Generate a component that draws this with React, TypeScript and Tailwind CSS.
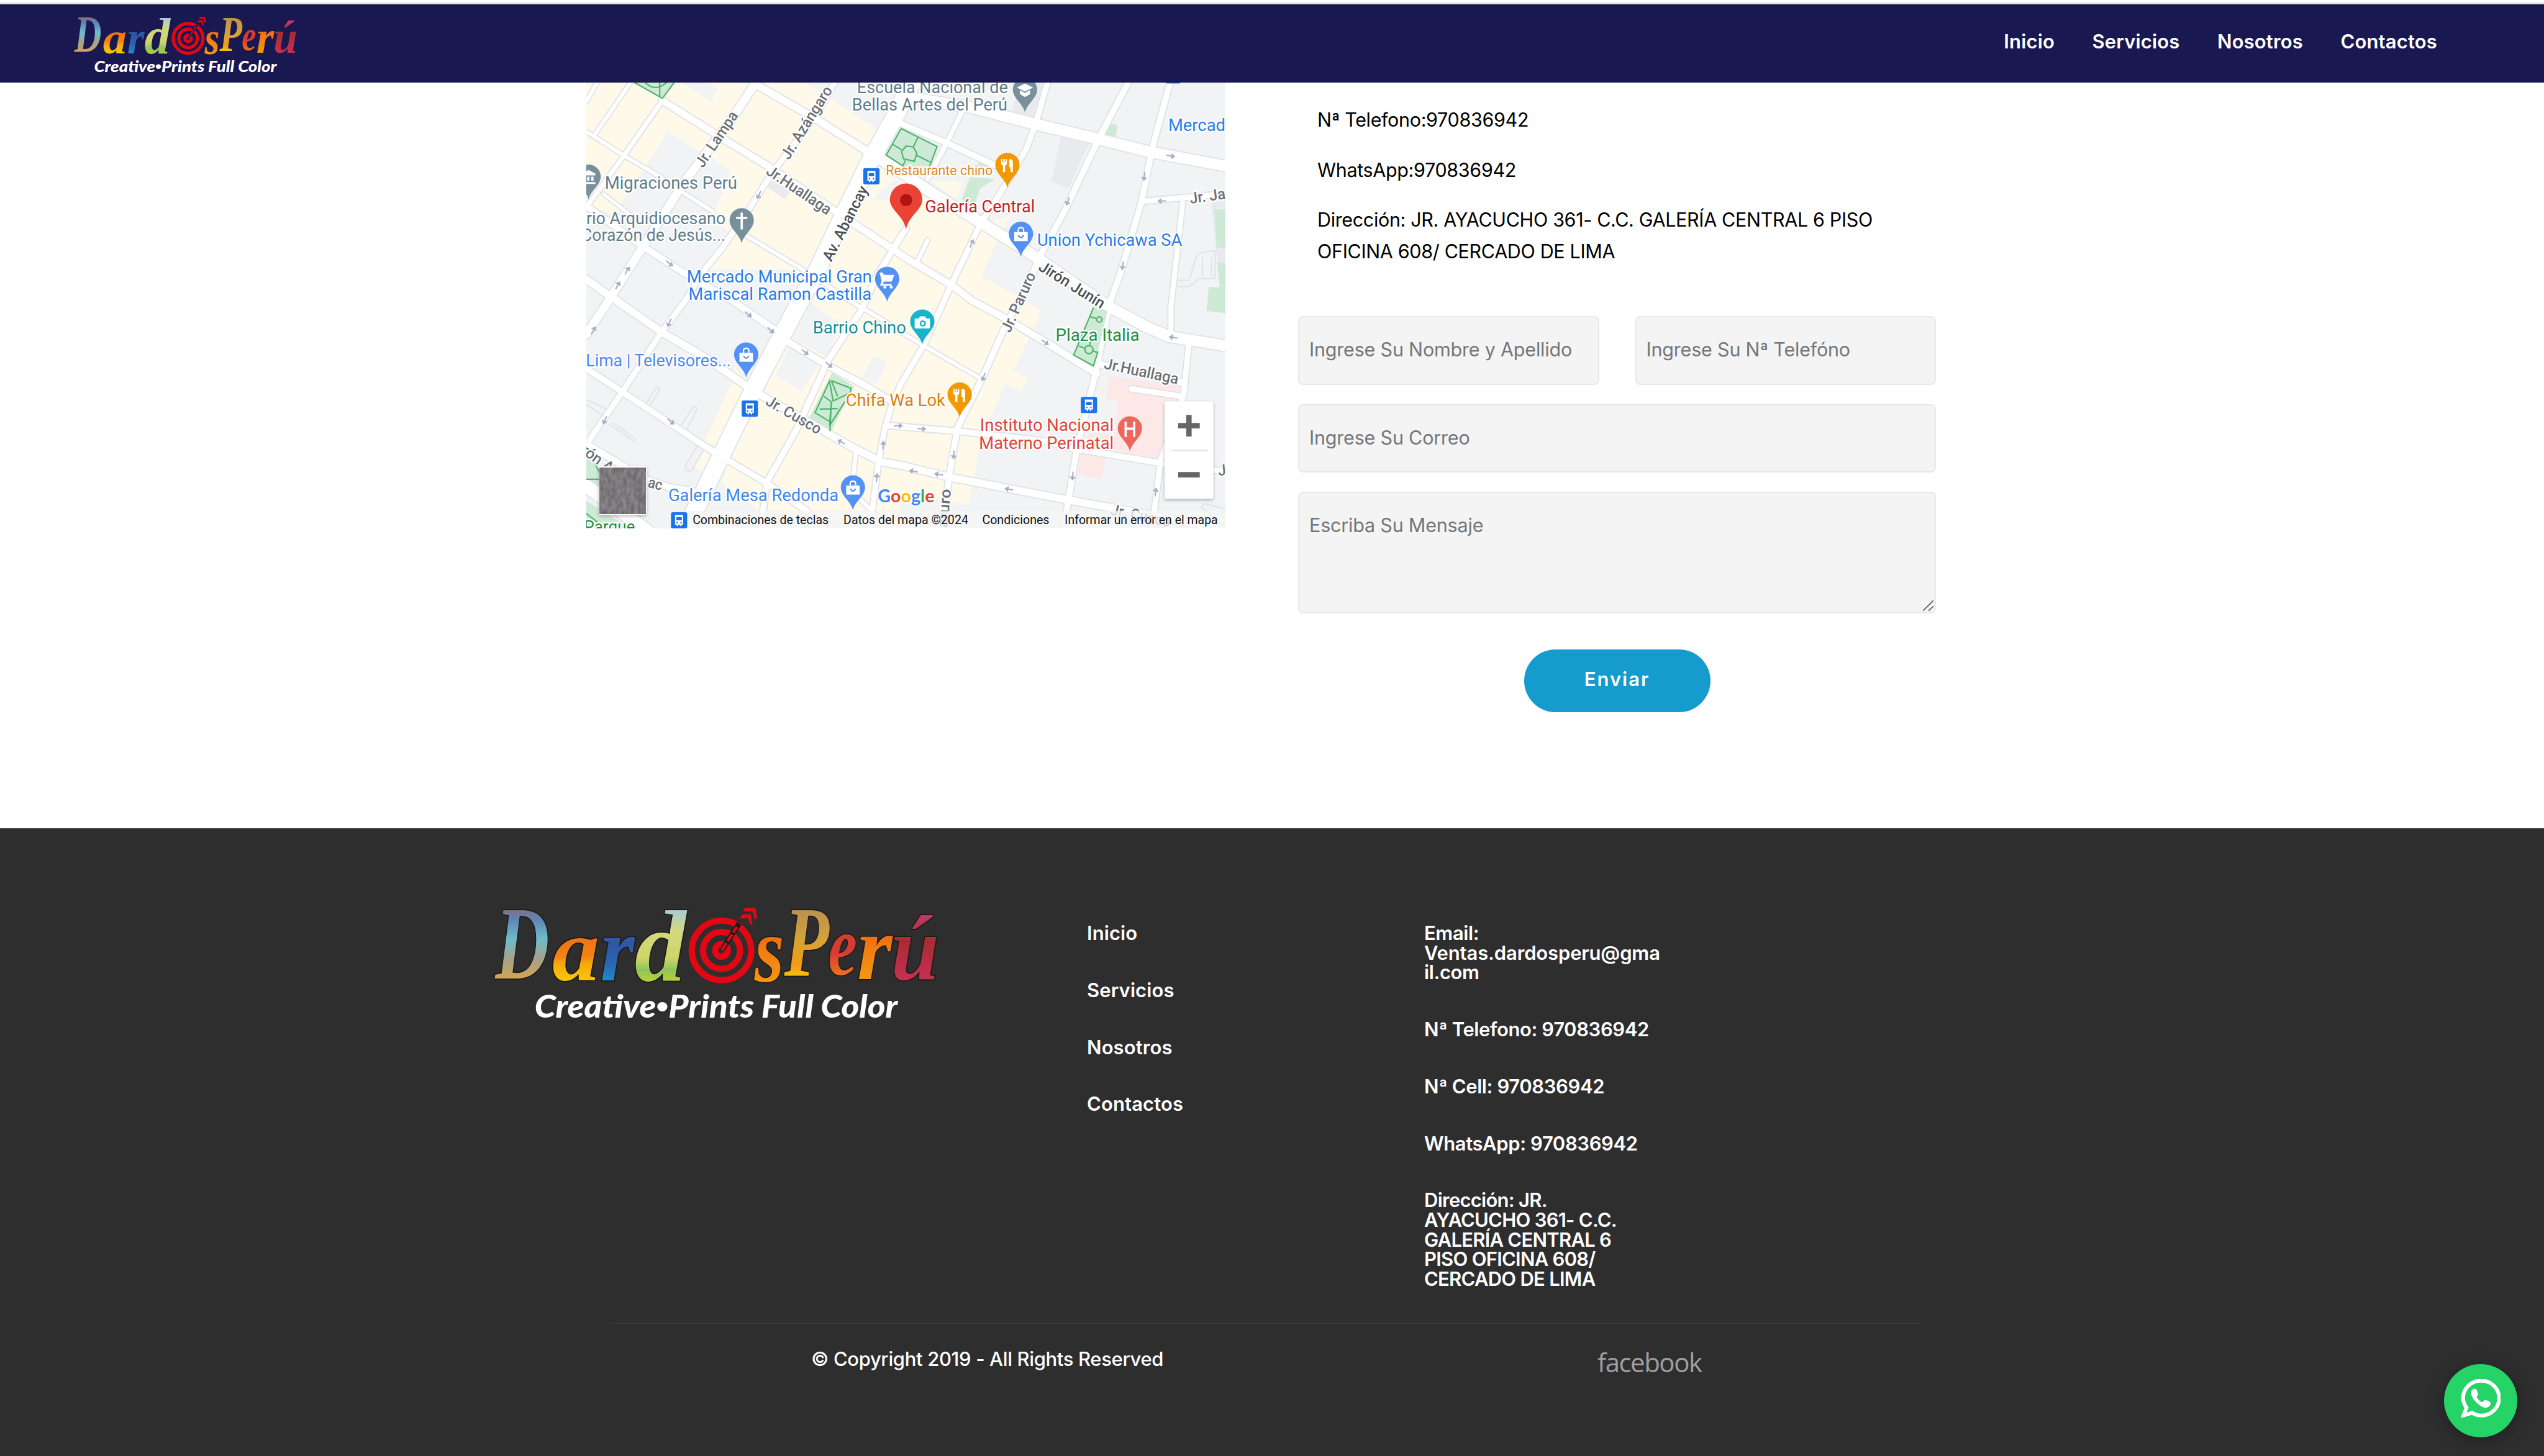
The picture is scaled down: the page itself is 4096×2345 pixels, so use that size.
import React from "react";

/* ---------- Logo ---------- */

type Letter = { ch: string; x: number; y: number; w: number; size: number; fill: string };

const letters: Letter[] = [
  { ch: "D", x: 5, y: 158, w: 120, size: 232, fill: "lgD" },
  { ch: "a", x: 131, y: 162, w: 105, size: 200, fill: "lgA" },
  { ch: "r", x: 238, y: 162, w: 76, size: 204, fill: "lgR" },
  { ch: "d", x: 314, y: 163, w: 114, size: 226, fill: "lgd" },
  { ch: "s", x: 580, y: 166, w: 66, size: 206, fill: "lgS" },
  { ch: "P", x: 646, y: 152, w: 100, size: 222, fill: "lgP" },
  { ch: "e", x: 744, y: 150, w: 64, size: 190, fill: "lgE" },
  { ch: "r", x: 808, y: 160, w: 78, size: 204, fill: "lgS" },
  { ch: "ú", x: 884, y: 160, w: 106, size: 204, fill: "lgU" },
];

const gradients: [string, [number, string][]][] = [
  ["lgD", [[0, "#a3605a"], [0.2, "#5f83b4"], [0.45, "#6cbcc9"], [0.7, "#a7a28a"], [1, "#dca545"]]],
  ["lgA", [[0, "#ea5f12"], [0.6, "#f38314"], [0.7, "#f7a80c"], [1, "#f8d000"]]],
  ["lgR", [[0, "#2e8fd0"], [0.4, "#2f56a6"], [0.7, "#2a66b0"], [1, "#1c93d2"]]],
  ["lgd", [[0, "#9ecbe0"], [0.3, "#d3d980"], [0.65, "#cfd566"], [0.8, "#8fc45a"], [1, "#c9d42c"]]],
  ["lgS", [[0, "#e65410"], [0.5, "#f37c12"], [1, "#f39a12"]]],
  ["lgP", [[0, "#b68c55"], [0.5, "#d7a336"], [0.8, "#f39a14"], [1, "#f8d400"]]],
  ["lgE", [[0, "#d5402a"], [0.6, "#d83a35"], [1, "#ef7a1a"]]],
  ["lgU", [[0, "#c43a6c"], [0.4, "#a82c34"], [1, "#cb2f55"]]],
];

function Logo({ className, id, outline }: { className: string; id: string; outline: string }) {
  return (
    <svg className={className + " overflow-visible"} viewBox="0 0 990 248" preserveAspectRatio="none">
      <defs>
        {gradients.map(([name, stops]) => (
          <linearGradient key={name} id={id + name} x1="0" y1="0.15" x2="0" y2="0.85">
            {stops.map(([o, c]) => (
              <stop key={o} offset={o} stopColor={c} />
            ))}
          </linearGradient>
        ))}
      </defs>
      {letters.map((l, i) => (
        <text
          key={i}
          x={l.x}
          y={l.y}
          fontSize={l.size}
          textLength={l.w}
          lengthAdjust="spacingAndGlyphs"
          fontFamily="Liberation Serif, serif"
          fontStyle="italic"
          fontWeight="700"
          fill={`url(#${id}${l.fill})`}
          stroke={outline}
          strokeWidth="5"
          paintOrder="stroke"
        >
          {l.ch}
        </text>
      ))}
      <g fill="none" stroke="#e30613" strokeWidth="14">
        <circle cx="507" cy="96" r="66" />
        <circle cx="507" cy="96" r="41" />
        <circle cx="507" cy="96" r="14" />
      </g>
      <path d="M510 92 L546 36" stroke={outline} strokeWidth="12" fill="none" />
      <path d="M508 95 L541 44" stroke="#e30613" strokeWidth="6" fill="none" strokeDasharray="18 5" />
      <path d="M546 26 L554 16 H572 L576 40 L570 38 L566 24 Z M554 9 L560 1 H582 L586 24 L581 27 L576 10 Z" fill="#e30613" />
      <text
        x="92"
        y="245"
        fontSize="70"
        textLength="806"
        lengthAdjust="spacingAndGlyphs"
        fontFamily="Lato, sans-serif"
        fontStyle="italic"
        fontWeight="900"
        fill="#fff"
      >
        Creative
        <tspan fontFamily="Liberation Sans, sans-serif" fontSize="72" fontStyle="normal">•</tspan>
        Prints Full Color
      </text>
    </svg>
  );
}

/* ---------- Map ---------- */

const roads: [string, number][] = [
  ["1400,183 1322,297", 8],
  ["1326,183 1302,225", 8],
  ["1471,223 1382,350 1302,460", 10],
  ["1304,293 1382,343 1474,397 1510,423 1584,470", 8],
  ["1340,430 1410,485", 7],
  ["1657,523 1786,600 1891,670 1955,707 2000,737 2051,767 2177,840", 8],
  ["1302,457 1428,547 1510,600 1630,670 1722,733 1749,758 1841,813 1924,857 1979,890", 14],
  ["1302,620 1359,660 1469,737 1565,793 1653,853 1689,877 1818,950 1887,990 1956,1025 2000,1033 2112,1060 2372,1110 2484,1130 2721,1175", 16],
  ["1302,818 1382,870 1575,997 1602,1013 1703,1073 1790,1133 1830,1173", 13],
  ["1302,985 1430,1062 1480,1080 1545,1092", 14],
  ["1290,1070 1440,1180", 28],
  ["1471,223 1588,297 1703,367 1852,467 1891,493 1983,553 2012,573 2112,632 2158,667 2242,712 2326,762 2436,830", 15],
  ["1680,188 1809,262 1928,337", 16],
  ["2440,808 2628,850", 14],
  ["1680,180 1630,257 1520,403 1428,547 1350,670 1302,742", 18],
  ["1855,180 1809,260 1712,387 1666,460 1602,553 1561,603 1520,670 1469,737 1382,870 1302,987", 12],
  ["2012,507 1983,553 1943,620 1914,687 1836,803 1822,837 1767,957 1703,1070 1694,1137 1692,1173", 13],
  ["1840,800 1790,900", 10],
  ["2326,183 2298,280 2279,330 2237,403 2177,497 2112,632 2091,680 2051,767 2000,853 1979,903 1965,950 1951,1023 1932,1173", 12],
  ["2505,183 2442,303 2363,470 2307,573 2279,643 2237,713 2182,837 2126,950 2107,1060 2095,1175", 13],
  ["2598,183 2559,327 2535,447 2489,603 2464,673 2433,827 2391,997 2368,1137 2362,1175", 13],
  ["2140,240 2102,317 2060,397", 10],
  ["2003,275 2102,317 2210,367", 13],
  ["2535,447 2721,430", 12],
  ["2626,450 2600,680 2600,740", 11],
  ["2640,763 2628,877 2577,1023 2558,1175", 12],
  ["1975,945 2000,947 2126,957 2326,980 2391,997 2577,1028 2721,1047", 13],
  ["1901,1000 1891,1090 1935,1133", 9],
  ["2037,580 2060,533", 9],
  ["2512,863 2626,880", 12],
  ["2000,213 2154,238 2298,275 2433,307 2554,337 2725,369", 24],
  ["1928,337 2000,381 2065,425 2177,493 2261,545 2307,575 2382,627 2465,682 2549,727 2596,747 2725,768", 24],
  ["2025,183 1992,250 1928,365 1880,463 1816,597 1776,670 1682,847 1607,1000 1543,1133 1524,1180", 38],
];

const cream = [
  "1302,183 1786,183 1947,285 1900,450 1805,600 1575,597 1620,520 1584,470 1610,420 1621,377 1483,293 1382,447 1370,480 1302,455",
  "1928,365 2006,385 2177,493 2214,537 2179,613 2293,677 2312,693 2251,822 2284,842 2268,870 2233,852 2196,933 2177,977 2163,1060 2151,1122 2112,1113 2000,1100 1995,1173 1690,1137 1602,1070 1682,847 1776,670 1880,463",
  "1625,850 1653,863 1588,990 1565,977",
  "1565,1000 1582,1008 1559,1047 1543,1037",
  "1630,813 1657,843 1648,847 1625,825",
  "2065,400 2140,403 2123,443",
  "2200,490 2242,480 2228,513",
];

const grey = [
  "1515,183 1570,183 1595,195 1578,225",
  "1722,833 1781,868 1820,807 1754,767",
  "1758,750 1836,793 1868,717 1823,690 1800,670",
  "1940,790 1970,803 1947,853 1914,840",
  "1940,440 1985,400 2000,400 1985,440 1965,446",
];

const darkGrey = [
  "1703,415 1716,400 1756,423 1744,442",
  "2356,303 2419,318 2372,418 2335,403",
  "2247,245 2303,267 2320,183 2265,183",
  "2690,450 2721,445 2721,583 2703,583",
];

const pink = [
  "2463,835 2621,857 2615,890 2587,890 2582,1020 2414,985 2414,962 2475,963 2482,890 2456,887",
  "2400,1007 2454,1018 2445,1062 2393,1052",
];

const green = [
  "2459,273 2482,277 2477,305 2452,300",
  "2154,393 2210,397 2177,417 2163,457 2135,443",
  "2170,352 2200,372 2172,368",
  "2696,465 2721,465 2721,550 2701,550",
  "2703,583 2721,583 2721,695 2679,690 2684,637 2708,637",
  "1302,1015 1325,1030 1335,1060 1335,1100 1302,1075",
  "1302,1112 1400,1173 1302,1173",
];

const parks = [
  "2001,285 2081,325 2063,372 2008,370 1968,344",
  "2428,680 2459,690 2438,780 2428,812 2384,788",
  "1848,827 1896,857 1846,957 1797,927",
  "1409,183 1471,220 1497,183",
];

const parkPaths = [
  "M2001 285 L2081 325 L2063 372 M2001 285 L1968 344 L2008 370 M2038 305 L2028 326 L2036 340 L2030 358 L2006 352 L2002 336 L2012 324 L2028 326 M1982 320 L2002 332 M2036 345 L2067 360 M2012 352 L2005 368",
  "M2428 683 L2384 788 L2428 812 L2438 780 M2420 703 L2446 710 M2395 768 L2436 782 M2420 765 L2424 745",
  "M1846 845 L1890 862 L1888 872 L1850 890 L1842 846 L1810 916 L1846 938 L1876 892 M1820 908 L1860 907 M1846 845 L1860 880 M1830 880 L1846 892 L1842 945 L1876 892 M1846 892 L1843 957",
  "M1409 183 L1471 218 L1497 183 M1433 183 Q1455 205 1480 183 M1465 183 V215",
  "M1302 1064 H1335 M1318 1024 L1332 1050 M1302 1140 L1345 1173",
];

const culs = [
  "M1437 893 L1456 862 Q1464 853 1463 868 L1444 900",
  "M1513 945 L1538 905 Q1548 897 1546 912 L1525 953",
  "M1548 990 L1522 1035 Q1525 1050 1536 1044 L1562 998",
  "M1302 888 L1348 908 M1302 898 L1338 922 M1352 940 L1410 982 M1360 938 L1412 975",
  "M2616 622 H2640 L2658 565 Q2665 560 2698 556 V618 H2660 Q2650 640 2616 636 M2670 572 V612 M2690 570 V612",
  "M2721 1130 L2675 1118 Q2660 1125 2680 1135 L2721 1150",
];

const arrows: [number, number, number][] = [
  [1685, 433, 115], [1487, 585, 40], [1393, 600, -60], [1372, 633, -60], [1318, 733, -60],
  [1486, 717, 115], [1662, 698, 40], [1712, 733, 40], [1788, 782, 40], [1841, 810, 40],
  [1490, 936, 40], [1343, 933, 115], [1868, 981, 210], [1995, 945, 0], [1961, 988, -85],
  [1947, 1060, -85], [2047, 952, 5], [2118, 1010, 95], [2028, 1046, 190], [2084, 1053, 190],
  [2240, 1086, 190], [2382, 1057, 95], [2566, 1092, -85], [2184, 837, 110], [2321, 760, 35],
  [2605, 749, 190], [2600, 346, 12], [2541, 392, 97], [2371, 447, 110], [2158, 540, -65],
  [2493, 590, 98], [2580, 446, 178],
];

type Label = { t: string; x: number; y: number; w: number; c: string; s?: number; r?: number };

const labels: Label[] = [
  { t: "Jr. Lampa", x: 1561, y: 374, w: 142, c: "#6b7074", r: -56, s: 34 },
  { t: "Jr. Azángaro", x: 1752, y: 356, w: 184, c: "#6b7074", r: -58, s: 34 },
  { t: "Jr.Huallaga", x: 1699, y: 385, w: 166, c: "#6b7074", r: 34, s: 34 },
  { t: "Av. Abancay", x: 1846, y: 582, w: 182, c: "#4a4f54", r: -63, s: 34 },
  { t: "Jr. Paruro", x: 2243, y: 740, w: 142, c: "#6b7074", r: -66, s: 34 },
  { t: "Jirón Junín", x: 2304, y: 598, w: 166, c: "#4a4f54", r: 32, s: 34 },
  { t: "Jr. Ja", x: 2643, y: 452, w: 80, c: "#6b7074", r: -8, s: 34 },
  { t: "Jr.Huallaga", x: 2450, y: 818, w: 168, c: "#6b7074", r: 12, s: 34 },
  { t: "Jr. Cusco", x: 1698, y: 897, w: 136, c: "#6b7074", r: 30, s: 34 },
  { t: "Paruro", x: 2102, y: 1196, w: 110, c: "#6b7074", r: -85, s: 34 },
  { t: "Jr. Cusco", x: 2464, y: 1142, w: 136, c: "#6b7074", r: 12, s: 34 },
  { t: "rón A", x: 1288, y: 1004, w: 80, c: "#6b7074", r: 36, s: 34 },
  { t: "ac", x: 1437, y: 1081, w: 32, c: "#6b7074", r: 14, s: 34 },
  { t: "Jr.", x: 2706, y: 1056, w: 34, c: "#6b7074", r: -5, s: 34 },
  { t: "Escuela Nacional de", x: 1903, y: 206, w: 335, c: "#607d8a" },
  { t: "Bellas Artes del Perú", x: 1892, y: 245, w: 345, c: "#607d8a" },
  { t: "Migraciones Perú", x: 1343, y: 419, w: 294, c: "#607d8a" },
  { t: "rio Arquidiocesano", x: 1302, y: 498, w: 309, c: "#607d8a" },
  { t: "Corazón de Jesús...", x: 1291, y: 534, w: 320, c: "#607d8a" },
  { t: "Mercado Municipal Gran", x: 1525, y: 627, w: 411, c: "#2b7de9" },
  { t: "Mariscal Ramon Castilla", x: 1529, y: 666, w: 406, c: "#2b7de9" },
  { t: "Lima | Televisores...", x: 1301, y: 813, w: 322, c: "#4a8bf0" },
  { t: "Barrio Chino", x: 1805, y: 740, w: 207, c: "#12919c" },
  { t: "Chifa Wa Lok", x: 1878, y: 902, w: 221, c: "#dd7e0b" },
  { t: "Restaurante chino", x: 1967, y: 389, w: 237, c: "#e08a2a", s: 30 },
  { t: "Galería Central", x: 2054, y: 471, w: 244, c: "#c5221f" },
  { t: "Union Ychicawa SA", x: 2303, y: 546, w: 322, c: "#2b7de9" },
  { t: "Mercad", x: 2594, y: 290, w: 127, c: "#2b7de9" },
  { t: "Plaza Italia", x: 2344, y: 757, w: 186, c: "#1e8e3e" },
  { t: "Instituto Nacional", x: 2176, y: 957, w: 297, c: "#e0453a" },
  { t: "Materno Perinatal", x: 2174, y: 996, w: 299, c: "#e0453a" },
  { t: "Galería Mesa Redonda", x: 1484, y: 1112, w: 378, c: "#3f87ee" },
  { t: "Parque", x: 1297, y: 1182, w: 113, c: "#1e8e3e" },
];

const glyphs: Record<string, React.ReactNode> = {
  museum: <path d="M-15 -8 L0 -16 L15 -8 V-4 H-15 Z M-12 -1 h5 v9 h-5 z M-3 -1 h5 v9 h-5 z M6 -1 h5 v9 h-5 z M-15 11 h30 v4 h-30 z" />,
  cross: <path d="M-2.5 -18 h5 v9 h10 v5 h-10 v23 h-5 v-23 h-10 v-5 h10 z" />,
  cap: <path d="M0 -15 L18 -6 L0 3 L-18 -6 Z M-11 0 L0 6 L11 0 V9 L0 15 L-11 9 Z" />,
  cart: <path d="M-17 -15 h7 l3 5 h23 l-6 15 h-17 l-3 5 h20 v4 h-26 l4 -10 z M-8 15 h6 v5 h-6 z M6 15 h6 v5 h-6 z" />,
  bag: (
    <>
      <path d="M-6 -5 V-9 Q-6 -15 0 -15 Q6 -15 6 -9 V-5" fill="none" stroke="#fff" strokeWidth="3" />
      <path d="M-15 -5 H15 V15 H-15 Z" />
      <path d="M-6 2 Q0 12 6 2" fill="none" stroke="#5491f5" strokeWidth="3" />
    </>
  ),
  fork: <path d="M-14 -14 h3 v7 h2 v-7 h3 v7 h2 v-7 h3 v9 q0 4 -4 5 v15 h-5 v-15 q-4 -1 -4 -5 z M5 -14 q7 0 7 6 v23 h-5 v-11 h-3 v-17 z" />,
  camera: (
    <>
      <path d="M-17 -8 h9 l3 -5 h11 l3 5 h8 v22 h-34 z" />
      <circle cx="1" cy="3" r="7" fill="#18b4cc" />
      <circle cx="1" cy="3" r="3.5" />
    </>
  ),
  h: <path d="M-12 -16 h5 v13 h14 v-13 h5 v34 h-5 v-16 h-14 v16 h-5 z" />,
};

const pins: [number, number, string, string][] = [
  [1307, 443, "#78909c", "museum"],
  [1647, 540, "#78909c", "cross"],
  [2276, 250, "#78909c", "cap"],
  [1970, 670, "#5491f5", "cart"],
  [2267, 570, "#5491f5", "bag"],
  [1657, 838, "#5491f5", "bag"],
  [1894, 1133, "#5491f5", "bag"],
  [2048, 765, "#18b4cc", "camera"],
  [2237, 417, "#f29900", "fork"],
  [2131, 927, "#f29900", "fork"],
  [2509, 1002, "#ee675c", "h"],
];

const stops: [number, number][] = [[1935, 391], [1665, 907], [2418, 899], [1508, 1155]];

const credits: [string, number, number][] = [
  ["Combinaciones de teclas", 1538, 302],
  ["Datos del mapa ©2024", 1873, 277],
  ["Condiciones", 2181, 149],
  ["Informar un error en el mapa", 2364, 340],
];

function MapView() {
  return (
    <svg className="h-[718px] w-[1029px] shrink-0 overflow-hidden" viewBox="1302 183 1419 990" preserveAspectRatio="none">
      <defs>
        <filter id="noise" x="0" y="0" width="1" height="1" colorInterpolationFilters="sRGB">
          <feTurbulence type="fractalNoise" baseFrequency="0.12 0.06" numOctaves="3" seed="4" />
          <feColorMatrix values="0.25 0 0 0 0.36  0.25 0 0 0 0.345  0.25 0 0 0 0.36  0 0 0 0 1" />
        </filter>
        <filter id="shadow" x="-20%" y="-20%" width="140%" height="140%">
          <feDropShadow dx="0" dy="3" stdDeviation="4" floodOpacity="0.3" />
        </filter>
      </defs>
      <rect x="1302" y="183" width="1419" height="990" fill="#f1f3f5" />
      {cream.map((p) => <polygon key={p} points={p} fill="#fef9e8" />)}
      {grey.map((p) => <polygon key={p} points={p} fill="#f1f3f5" />)}
      {darkGrey.map((p) => <polygon key={p} points={p} fill="#e8eaed" />)}
      {pink.map((p) => <polygon key={p} points={p} fill="#fbe8e7" />)}
      {green.map((p) => <polygon key={p} points={p} fill="#ceead6" />)}
      {culs.map((d) => <path key={d} d={d} fill="none" stroke="#e1e3e6" strokeWidth="3" />)}
      <g fill="none" strokeLinejoin="round" strokeLinecap="round">
        {roads.map(([p, w]) => <polyline key={p} points={p} stroke="#e0e2e6" strokeWidth={w + 5} />)}
        {roads.map(([p, w]) => <polyline key={p} points={p} stroke="#fff" strokeWidth={w} />)}
      </g>
      {parks.map((p) => <polygon key={p} points={p} fill="#ceead6" />)}
      {parkPaths.map((d) => <path key={d} d={d} fill="none" stroke="#4db56a" strokeWidth="3" />)}
      <circle cx="2418" cy="776" r="9" fill="#ceead6" stroke="#4db56a" strokeWidth="3" />
      <circle cx="2441" cy="709" r="6" fill="#ceead6" stroke="#4db56a" strokeWidth="3" />
      {arrows.map(([x, y, r]) => (
        <path
          key={`${x}-${y}`}
          transform={`translate(${x} ${y}) rotate(${r})`}
          d="M-10 -1.5 H1 V-7 L10 0 L1 7 V1.5 H-10 Z"
          fill="#a9aec9"
        />
      ))}
      <rect x="2590" y="170" width="30" height="15" fill="#1a73e8" />
      {labels.map((l) => (
        <text
          key={l.t + l.x}
          transform={`translate(${l.x} ${l.y}) rotate(${l.r ?? 0})`}
          fontSize={l.s ?? 37.5}
          textLength={l.w}
          lengthAdjust="spacingAndGlyphs"
          fontFamily="Roboto, sans-serif"
          fontWeight={l.r ? 500 : 450}
          fill={l.c}
          stroke="#fff"
          strokeWidth="6"
          strokeLinejoin="round"
          paintOrder="stroke"
        >
          {l.t}
        </text>
      ))}
      {pins.map(([x, y, c, g]) => (
        <g key={`${x}-${y}`} transform={`translate(${x} ${y})`}>
          <path d="M0 0 C-4 -20 -27 -32 -27 -51 A27 27 0 0 1 27 -51 C27 -32 4 -20 0 0 Z" fill={c} />
          <g transform="translate(0 -50)" fill="#fff">{glyphs[g]}</g>
        </g>
      ))}
      <path d="M2012 509 C2006 478 1976 466 1976 443 A36 36 0 0 1 2048 443 C2048 466 2018 478 2012 509 Z" fill="#ea4335" />
      <circle cx="2012" cy="444" r="13.5" fill="#b31412" />
      <rect x="1520" y="1134" width="1201" height="39" fill="#f5f5f5" opacity="0.8" />
      {stops.map(([x, y]) => (
        <g key={`${x}-${y}`} transform={`translate(${x} ${y})`}>
          <rect x="-18" y="-18" width="36" height="36" rx="4" fill="#1a73e8" />
          <path d="M-9 -12 h18 v22 h-4 v3 h-3 v-3 h-4 v3 h-3 v-3 h-4 z" fill="#fff" />
          <path d="M-6 -7 h12 v7 h-12 z M-6 4 h3 v3 h-3 z M3 4 h3 v3 h-3 z" fill="#1a73e8" />
        </g>
      ))}
      <text x="1949" y="1115" fontSize="40" textLength="126" lengthAdjust="spacingAndGlyphs" fontFamily="Lato, sans-serif" fontWeight="700" stroke="#fff" strokeWidth="5" paintOrder="stroke">
        <tspan fill="#4285f4">G</tspan><tspan fill="#ea4335">o</tspan><tspan fill="#fbbc05">o</tspan><tspan fill="#4285f4">g</tspan><tspan fill="#34a853">l</tspan><tspan fill="#ea4335">e</tspan>
      </text>
      {credits.map(([t, x, w]) => (
        <text key={t} x={x} y="1164" fontSize="27" textLength={w} lengthAdjust="spacingAndGlyphs" fontFamily="Roboto, sans-serif" fill="#111">
          {t}
        </text>
      ))}
      <g filter="url(#shadow)">
        <rect x="1330" y="1035" width="106" height="108" rx="4" fill="#fff" />
      </g>
      <rect x="1332" y="1038" width="102" height="102" filter="url(#noise)" />
      <g filter="url(#shadow)">
        <rect x="2586" y="891" width="108" height="216" rx="4" fill="#fff" />
      </g>
      <path d="M2601 1000 H2682" stroke="#e2e2e2" strokeWidth="3" />
      <path d="M2616 945 H2664 M2640 921 V969 M2616 1054 H2664" stroke="#666" strokeWidth="12" />
    </svg>
  );
}

/* ---------- Page ---------- */

const nav = ["Inicio", "Servicios", "Nosotros", "Contactos"];

const field =
  "block w-full rounded-[8px] border-2 border-[#e8e8e8] bg-[#f4f4f4] px-[16px] text-[30.5px] leading-[50px] tracking-[-0.2px] placeholder:text-[#73777b]";

export default function App() {
  return (
    <div className="flex h-[2345px] w-[4096px] flex-col overflow-hidden bg-white font-['Inter','Liberation_Sans',sans-serif] text-black">
      <header className="flex h-[133px] shrink-0 flex-col pt-[4px]">
        <div className="h-[3px] bg-[#e2e4dd]" />
        <div className="flex flex-1 items-start justify-between bg-[#191850] pr-[172px] pl-[118px]">
          <Logo className="mt-[20px] h-[90px] w-[361px]" id="h" outline="#191850" />
          <nav className="mt-[35px] flex gap-[60.5px] text-[31px] leading-[50px] font-semibold tracking-[0.15px] text-white">
            {nav.map((n) => (
              <a key={n}>{n}</a>
            ))}
          </nav>
        </div>
      </header>

      <main className="flex h-[1201px] shrink-0 items-start gap-[117px] pl-[944px]">
        <MapView />
        <div className="w-[1027px] pt-[35px]">
          <div className="flex flex-col gap-[30px] pl-[31px] text-[30.5px] leading-[50.5px] tracking-[-0.35px]">
            <p>Nª Telefono:970836942</p>
            <p>WhatsApp:970836942</p>
            <p>
              Dirección: JR. AYACUCHO 361- C.C. GALERÍA CENTRAL 6 PISO
              <br />
              OFICINA 608/ CERCADO DE LIMA
            </p>
          </div>
          <form className="mt-[78.5px] flex flex-col">
            <div className="flex gap-[58px]">
              <input className={field + " h-[111px] pb-[3px]"} placeholder="Ingrese Su Nombre y Apellido" />
              <input className={field + " h-[111px] pb-[3px]"} placeholder="Ingrese Su Nª Telefóno" />
            </div>
            <input className={field + " mt-[31px] h-[110px] pb-[3px]"} placeholder="Ingrese Su Correo" />
            <div className="relative mt-[31px]">
              <textarea className={field + " h-[196px] resize-none py-[27px]"} placeholder="Escriba Su Mensaje" />
              <svg className="absolute right-[4px] bottom-[4px] size-[17px]" viewBox="0 0 17 17">
                <path d="M0 17 L17 0 M9 17 L17 9" stroke="#555" strokeWidth="1.6" />
              </svg>
            </div>
            <button className="mt-[58px] h-[101px] w-[300px] self-center rounded-full bg-[#159bce] pb-[3px] text-[31px] font-semibold tracking-[2px] text-white">
              Enviar
            </button>
          </form>
        </div>
      </main>

      <footer className="flex flex-1 flex-col bg-[#2e2e2e] text-[31px] font-semibold text-white">
        <div className="flex h-[796px] shrink-0 items-start pl-[794px]">
          <Logo className="mt-[127px] h-[180px] w-[718px]" id="f" outline="#1b1b1b" />
          <ul className="mt-[153px] ml-[238px] flex w-[543px] flex-col gap-[60.2px] leading-[31.6px] tracking-[0.1px]">
            {nav.map((n) => (
              <li key={n}>{n}</li>
            ))}
          </ul>
          <ul className="mt-[153px] flex flex-col gap-[60.2px] leading-[31.6px] tracking-[-0.4px]">
            <li>
              Email:
              <br />
              <span className="tracking-[-0.15px]">Ventas.dardosperu@gma</span>
              <br />
              il.com
            </li>
            <li>Nª Telefono: 970836942</li>
            <li>Nª Cell: 970836942</li>
            <li>WhatsApp: 970836942</li>
            <li className="tracking-[-0.75px]">
              Dirección: JR.
              <br />
              AYACUCHO 361- C.C.
              <br />
              GALERÍA CENTRAL 6
              <br />
              PISO OFICINA 608/
              <br />
              CERCADO DE LIMA
            </li>
          </ul>
        </div>
        <div className="mr-[1003px] ml-[982px] flex items-start border-t-2 border-[#393939] pl-[324px]">
          <p className="mt-[32px] w-[1266px] text-[31px] leading-[50px] font-medium tracking-[-0.35px]">
            © Copyright 2019 - All Rights Reserved
          </p>
          <p className="mt-[37px] font-['Open_Sans','Noto_Sans',sans-serif] text-[42px] leading-[50px] font-normal tracking-[-1.5px] text-[#a0a0a0]">
            facebook
          </p>
        </div>
      </footer>

      <a className="fixed right-[43px] bottom-[30px] flex size-[118px] items-center justify-center rounded-full bg-[#25d366] shadow-[0_4px_24px_rgba(0,0,0,0.35)]">
        <svg className="-mt-[8px] h-[62px] w-[64px]" viewBox="250 248 262 254">
          <path
            d="M268 488 L288 438 Q265 405 265 374 A119 115 0 1 1 384 489 Q350 487 326 471 Z"
            fill="none"
            stroke="#fff"
            strokeWidth="25"
          />
          <path
            d="M318 338 Q322 312 342 312 Q356 314 358 330 L365 348 Q364 358 354 364 Q366 392 392 402 Q402 386 414 385 L440 398 Q450 404 447 414 Q438 436 412 438 Q385 436 350 400 Q318 366 318 338 Z"
            fill="#fff"
          />
        </svg>
      </a>
    </div>
  );
}
